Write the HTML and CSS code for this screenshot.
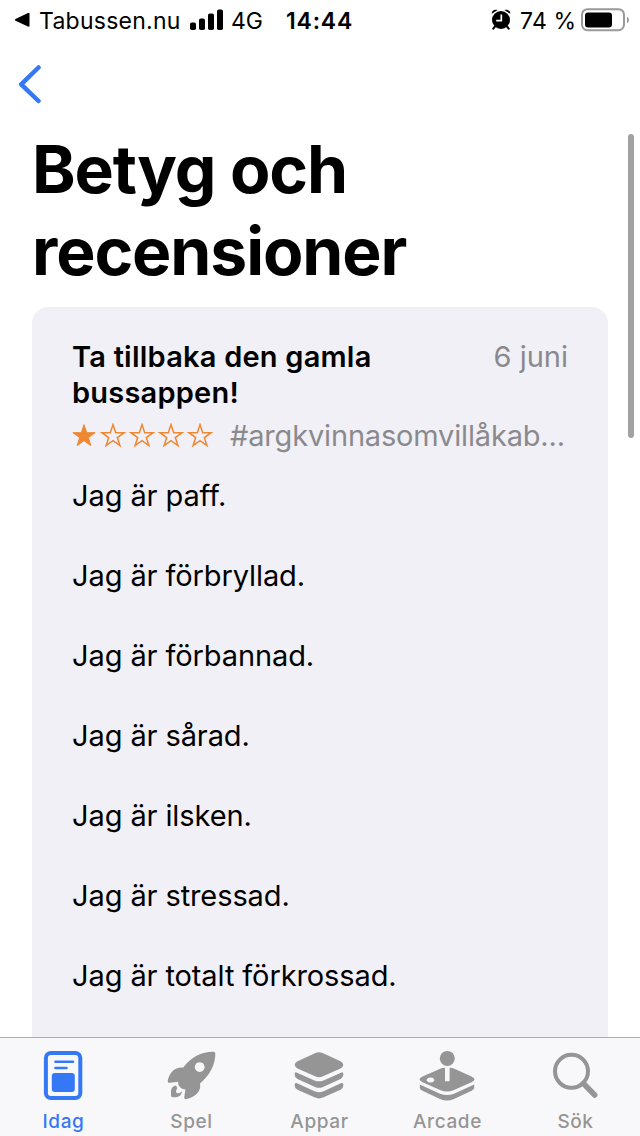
FILE: index.html
```html
<!DOCTYPE html>
<html lang="sv">
<head>
<meta charset="utf-8">
<title>Betyg och recensioner</title>
<link rel="stylesheet" href="styles.css">
</head>
<body>
<div class="screen">
  <header class="status">
    <svg class="status-back" width="16" height="16" viewBox="0 0 16 16"><path d="M1.500 7 14 1Q15.500 .6 15.500 1.600V14Q15.500 15 14 14.600L1.500 8.800Q0 8 1.500 7Z"/></svg>
    <span class="status-app">Tabussen.nu</span>
    <svg class="signal" width="34" height="22" viewBox="0 0 34 22"><rect x="0" y="13.500" width="6" height="7.500" rx="1.800"/><rect x="9" y="9.500" width="6" height="11.500" rx="1.800"/><rect x="18" y="4.500" width="6" height="16.500" rx="1.800"/><rect x="27" y="0.500" width="6" height="20.500" rx="1.800"/></svg>
    <span class="network">4G</span>
    <span class="clock">14:44</span>
    <svg class="alarm" width="20" height="21" viewBox="0 0 20 21"><circle cx="10" cy="11" r="9"/><path d="M.8 4.800C.2 2 3.500-.4 6.600 1.100ZM19.200 4.800C19.800 2 16.500-.4 13.400 1.100Z"/><path class="alarm-feet" d="M4 17.500 2.300 19.600M16 17.500l1.700 2.100"/><path class="alarm-hands" d="M10.300 5.500v6.100H5.200"/></svg>
    <span class="percent">74 %</span>
    <svg class="battery" width="49" height="24" viewBox="0 0 49 24"><rect class="battery-shell" x="1" y="1.200" width="42" height="21" rx="5.500"/><rect x="4" y="4.500" width="27" height="15" rx="3"/><path class="battery-cap" d="M46 8.500Q48 9.500 48 12T46 15.500Z"/></svg>
  </header>
  <nav class="nav">
    <svg width="26" height="40" viewBox="0 0 26 40"><path class="chevron" d="M21.500 2.500 4.200 19.300l17.300 16.700"/></svg>
  </nav>
  <main class="content">
    <h1 class="title">Betyg och<br>recensioner</h1>
    <article class="card">
      <div class="card-head">
        <h2 class="review-title">Ta tillbaka den gamla<br>bussappen!</h2>
        <span class="date">6 juni</span>
      </div>
      <div class="rating">
        <svg class="stars" width="142" height="26" viewBox="0 0 142 26">
          <defs><path id="star" d="M12 1.600 14.700 9.700H23.100L16.300 14.600 18.900 22.600 12 17.700 5.100 22.600 7.700 14.600 .9 9.700H9.300Z"/></defs>
          <use class="star-full" href="#star"/>
          <use class="star-empty" href="#star" x="29"/>
          <use class="star-empty" href="#star" x="58"/>
          <use class="star-empty" href="#star" x="87"/>
          <use class="star-empty" href="#star" x="116"/>
        </svg>
        <span class="author">#argkvinnasomvillåkab...</span>
      </div>
      <div class="body">
        <p>Jag är paff.</p>
        <p>Jag är förbryllad.</p>
        <p>Jag är förbannad.</p>
        <p>Jag är sårad.</p>
        <p>Jag är ilsken.</p>
        <p>Jag är stressad.</p>
        <p>Jag är totalt förkrossad.</p>
      </div>
    </article>
    <div class="scrollbar"></div>
  </main>
  <footer class="tabs">
    <div class="tab tab-active">
      <svg width="60" height="56" viewBox="0 0 60 56"><rect class="today-frame" x="12.900" y="4.900" width="34.400" height="45.200" rx="5"/><path class="today-lines" d="M22.500 13.800h17.500M22.500 20h11"/><rect x="18.800" y="25" width="23" height="19" rx="3"/></svg>
      <span>Idag</span>
    </div>
    <div class="tab">
      <svg width="60" height="56" viewBox="0 0 60 56"><path fill-rule="evenodd" d="M52.500 3.700Q54.300 3.500 54.300 5.300C54.600 16 49 27.500 39 35.500C40.500 42.500 35.500 48.500 25.800 51Q23.300 51.600 23.200 49.500L24.400 41.500Q21.500 41.500 19.300 39.500Q16.800 37 17 33.800L9 34.800Q6.300 35 6.800 32.500C8.500 24 14.500 18.500 22.300 19.500C30 9 40 4 52.500 3.700ZM38.700 14.200a4.900 4.900 0 1 0 .01 0Z"/><path d="M14.800 37.500Q10 38.500 10 43.500V47.500Q10 49.300 11.800 49.300H14.500Q20.500 49 21 43.300Q18.800 45.800 16 45.200Q14 43.500 16.300 40Q15.800 38.500 14.800 37.500Z"/></svg>
      <span>Spel</span>
    </div>
    <div class="tab">
      <svg width="60" height="56" viewBox="0 0 60 56"><path d="M26.500 5.100Q30 3.500 33.500 5.100L51.500 13.200Q54 14.300 54.300 16.700Q54.200 19.200 51.500 20.500L34 28.300Q30 30.100 26 28.300L8.500 20.500Q6 19.200 5.700 16.700Q6 14.300 8.500 13.200Z"/><path d="M7.500 24.400 25.500 32.400Q30 34.300 34.500 32.400L52.500 24.400Q54.300 23.800 54.300 26V27Q54.300 29.700 51.500 31L34 38.900Q30 40.700 26 38.900L8.500 31Q5.700 29.700 5.700 27V26Q5.700 23.800 7.500 24.400ZM7.500 35.100 25.500 43.300Q30 45.300 34.500 43.300L52.500 35.100Q54.300 34.500 54.300 36.700V37.700Q54.300 40.400 51.500 41.700L34 49.600Q30 51.200 26 49.600L8.500 41.700Q5.700 40.400 5.700 37.700V36.700Q5.700 34.500 7.500 35.100Z"/></svg>
      <span>Appar</span>
    </div>
    <div class="tab">
      <svg width="60" height="56" viewBox="0 0 60 56"><circle cx="30.300" cy="10.400" r="7.500"/><path fill-rule="evenodd" d="M28 19.800V33.300h4.600V19.800Q35.500 19.900 38 21L54.500 28.500Q60.500 31.300 54.500 34.200L37 42Q30 45 23 42L5.500 34.200Q-.5 31.300 5.500 28.500L22.600 21Q25 19.900 28 19.800ZM13.500 29.400a3.800 2.500 0 1 0 .01 0Z"/><path d="M2.800 36.500 23 45.700Q30 48.500 37 45.700L57.200 36.500V40Q57 41.500 54.500 42.800L37 51Q30 54 23 51L5.500 42.800Q3 41.500 2.800 40Z"/></svg>
      <span>Arcade</span>
    </div>
    <div class="tab">
      <svg width="60" height="56" viewBox="0 0 60 56"><circle class="lens" cx="26.500" cy="23.300" r="16.500"/><path class="handle" d="M38.500 35.500 49.700 47"/></svg>
      <span>Sök</span>
    </div>
  </footer>
</div>
</body>
</html>
```

FILE: styles.css
```css
* { box-sizing: border-box; }
body, h1, h2, p { margin: 0; }
body { background: #fff; font-family: Inter, "Liberation Sans", sans-serif; color: #000; }
svg { display: block; flex: none; }
span { white-space: nowrap; }
.screen { width: 640px; height: 1136px; display: flex; flex-direction: column; overflow: hidden; }

.status { height: 40px; display: flex; align-items: center; padding: 0 11px 0 14px; font-size: 23px; line-height: 38px; flex: none; }
.status span { padding-top: 2px; }
.status-app { width: 150px; padding-left: 9px; letter-spacing: .25px; }
.signal { margin-left: 10px; }
.network { width: 55px; margin-left: 7px; }
.clock { font-weight: 600; letter-spacing: .8px; }
.alarm { margin-left: auto; margin-top: -2px; }
.alarm-feet { fill: none; stroke: #000; stroke-width: 2; stroke-linecap: round; }
.alarm-hands { fill: none; stroke: #fff; stroke-width: 1.700; }
.percent { width: 61px; margin-left: 9px; letter-spacing: .2px; }
.battery { margin-right: -1px; }
.battery-shell { fill: none; stroke: #999; stroke-width: 2; }
.battery-cap { fill: #999; }

.nav { height: 88px; padding: 25px 0 0 17px; flex: none; }
.chevron { fill: none; stroke: #3478f6; stroke-width: 4.500; stroke-linecap: round; stroke-linejoin: round; }

.content { flex: 1; min-height: 0; padding: 0 32px; position: relative; display: flex; flex-direction: column; gap: 15px; overflow: hidden; }
.title { font-size: 66px; line-height: 82px; font-weight: 700; letter-spacing: -1.100px; flex: none; }
.card { background: #f1f0f6; border-radius: 16px 16px 0 0; padding: 32px 40px 0; flex: 1; min-height: 0; }
.card-head { display: flex; justify-content: space-between; line-height: 36px; font-size: 29px; }
.review-title { font-size: 29px; font-weight: 600; letter-spacing: .22px; white-space: nowrap; }
.date, .author { color: #8a8a8e; }
.rating { display: flex; align-items: center; margin-top: 7px; height: 36px; font-size: 29px; line-height: 36px; gap: 16px; }
.author { letter-spacing: -.17px; }
.star-full { fill: #ef8833; stroke: #ef8833; stroke-width: 1; }
.star-empty { fill: none; stroke: #ef8833; stroke-width: 1.500; }
.body { margin-top: 22px; font-size: 29px; line-height: 40px; letter-spacing: -.1px; display: flex; flex-direction: column; gap: 40px; }
.scrollbar { position: absolute; right: 6px; top: 6px; width: 6px; height: 304px; border-radius: 3px; background: #a2a2a2; }

.tabs { height: 99px; flex: none; display: grid; grid-template-columns: repeat(5, 128px); background: #f8f8fa; border-top: 1px solid #adadb1; color: #959595; font-size: 19px; line-height: 24px; font-weight: 500; letter-spacing: .6px; }
.tab { display: flex; flex-direction: column; align-items: center; padding: 10px 2px 0 0; gap: 6px; }
.tab span { padding-left: 1px; }
.tab svg { fill: #959595; }
.tab-active { color: #3478f6; }
.tab-active svg { fill: #3478f6; }
.today-frame { fill: none; stroke: #3478f6; stroke-width: 4; }
.today-lines { fill: none; stroke: #3478f6; stroke-width: 2.600; stroke-linecap: round; }
.lens { fill: none; stroke: #959595; stroke-width: 4; }
.handle { fill: none; stroke: #959595; stroke-width: 5.500; stroke-linecap: round; }
```
